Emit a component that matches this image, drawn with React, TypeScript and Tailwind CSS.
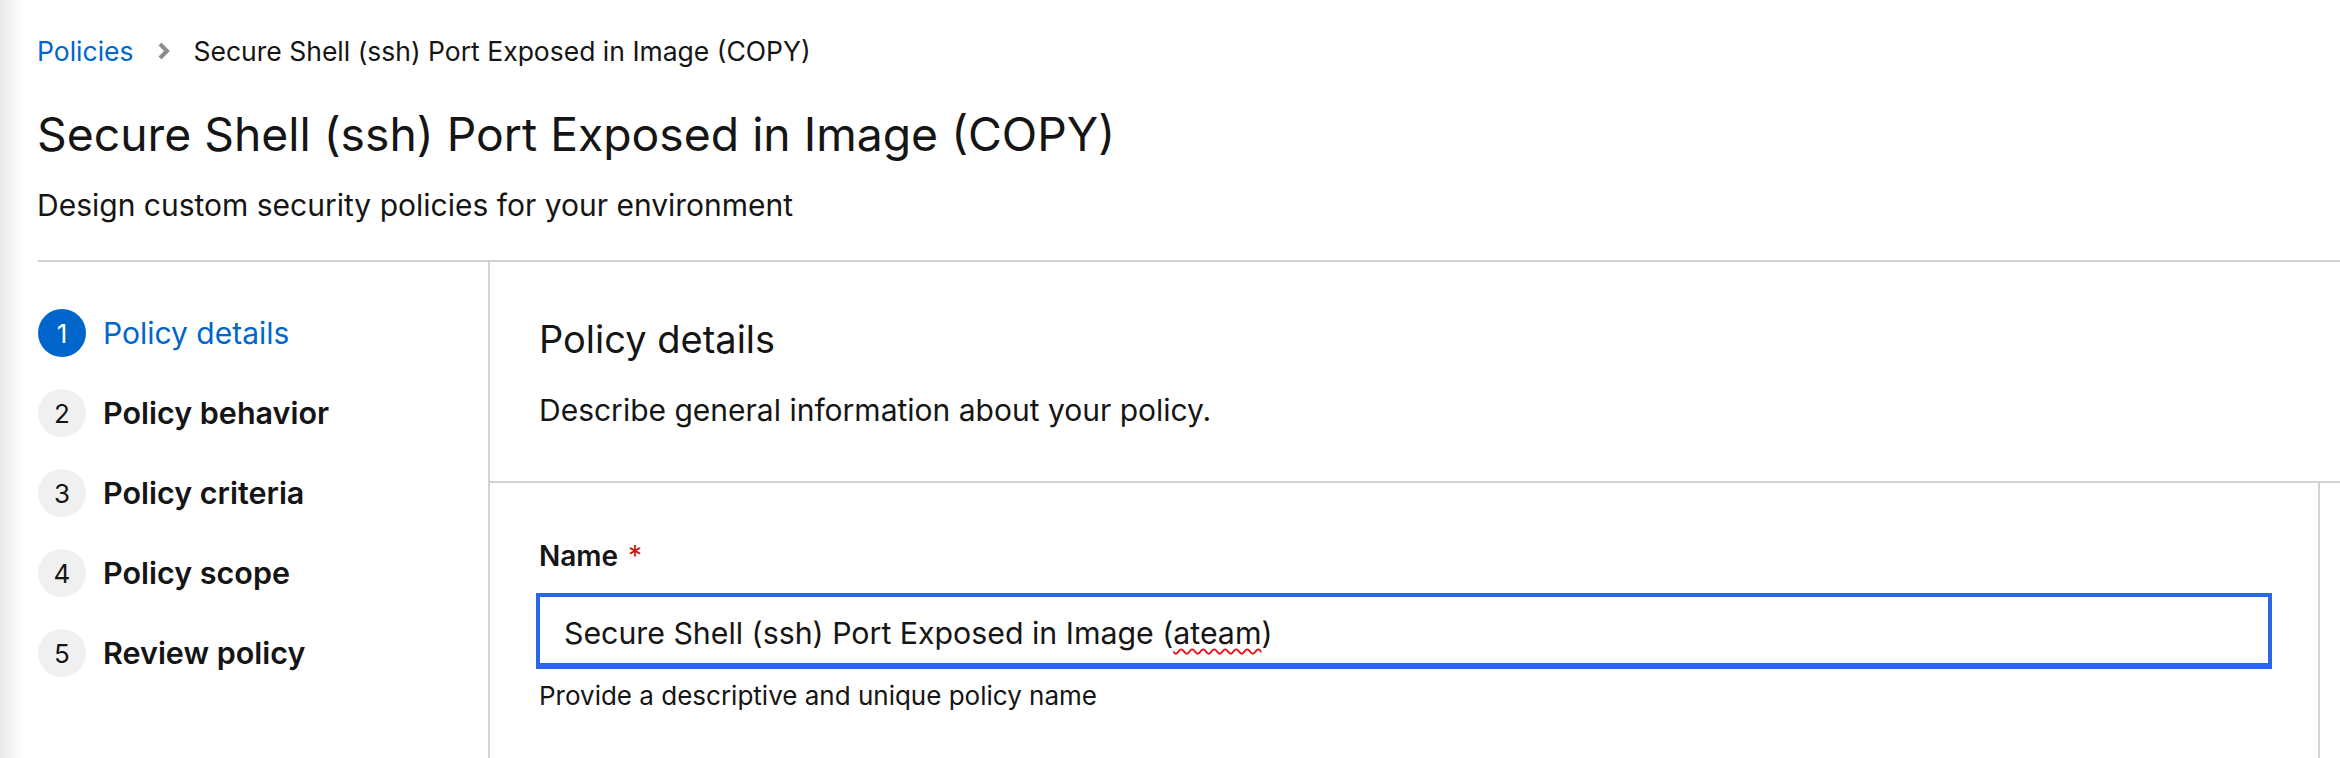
import React from "react";

const FONT = { fontFamily: '"Inter", "Noto Sans", sans-serif' };

function Chevron() {
  return (
    <svg width="12" height="18" viewBox="0 0 12 18" className="shrink-0">
      <path d="M2 2 L9 9 L2 16" fill="none" stroke="#8a8d90" strokeWidth="4" strokeLinejoin="miter" />
    </svg>
  );
}

const steps = [
  { n: 1, label: "Policy details", active: true },
  { n: 2, label: "Policy behavior" },
  { n: 3, label: "Policy criteria" },
  { n: 4, label: "Policy scope" },
  { n: 5, label: "Review policy" },
];

export default function App() {
  return (
    <div className="flex w-[2340px] h-[758px] bg-white overflow-hidden text-[#151515]" style={FONT}>
      <div className="w-[24px] shrink-0 bg-gradient-to-r from-[#e8e8e8] via-[#f5f5f5] to-white" />
      <div className="flex-1 flex flex-col min-w-0">
        <div className="pl-[13px] pt-[30px] pb-[33px]">
          <nav className="flex items-center h-[42px] text-[26.5px] leading-[42px]">
            <span className="text-[#0066cc]">Policies</span>
            <span className="ml-[24px] mr-[24px] flex items-center"><Chevron /></span>
            <span>Secure Shell (ssh) Port Exposed in Image (COPY)</span>
          </nav>
          <h1 className="mt-[32px] text-[46.3px] leading-[60px] font-normal">Secure Shell (ssh) Port Exposed in Image (COPY)</h1>
          <p className="mt-[19px] text-[30px] leading-[44px]">Design custom security policies for your environment</p>
        </div>
        <div className="flex flex-1 ml-[14px] border-t-2 border-[#d2d2d2]">
          <div className="w-[452px] shrink-0 border-r-2 border-[#d2d2d2] pt-[31px]">
            {steps.map((s) => (
              <div key={s.n} className="flex items-center h-[80px]">
                <div
                  className={
                    s.active
                      ? "w-[48px] h-[48px] rounded-full bg-[#0066cc] text-white flex items-center justify-center text-[26px]"
                      : "w-[48px] h-[48px] rounded-full bg-[#f0f0f0] text-[#151515] flex items-center justify-center text-[26px]"
                  }
                >
                  {s.n}
                </div>
                <span
                  className={
                    s.active
                      ? "ml-[17px] text-[30px] text-[#0066cc] font-normal"
                      : "ml-[17px] text-[30.5px] text-[#151515] font-semibold"
                  }
                >
                  {s.label}
                </span>
              </div>
            ))}
          </div>
          <div className="flex-1 flex flex-col min-w-0">
            <div className="pl-[49px] pt-[51px] pb-[49px] border-b-2 border-[#d2d2d2]">
              <h2 className="text-[38px] leading-[52px] font-normal">Policy details</h2>
              <p className="mt-[23px] text-[30px] leading-[44px]">Describe general information about your policy.</p>
            </div>
            <div className="flex flex-1">
              <div className="flex-1 border-r-2 border-[#d2d2d2] pl-[46px] pr-[46px] pt-[53px]">
                <div className="flex items-center h-[40px] pl-[3px] text-[28px] leading-[40px] font-semibold">
                  Name<span className="ml-[10px] text-[#c9190b] font-normal">*</span>
                </div>
                <div className="mt-[17px] h-[76px] border-4 border-b-[6px] border-[#2a66e8] flex items-center pl-[24px] pt-[8px] text-[30.3px]">
                  <span>
                    Secure Shell (ssh) Port Exposed in Image (
                    <span className="underline decoration-wavy decoration-[#e5141b] decoration-2 underline-offset-4">ateam</span>)
                  </span>
                </div>
                <p className="mt-[7px] pl-[3px] text-[26px] leading-[40px]">Provide a descriptive and unique policy name</p>
              </div>
              <div className="w-[20px] shrink-0" />
            </div>
          </div>
        </div>
      </div>
    </div>
  );
}
